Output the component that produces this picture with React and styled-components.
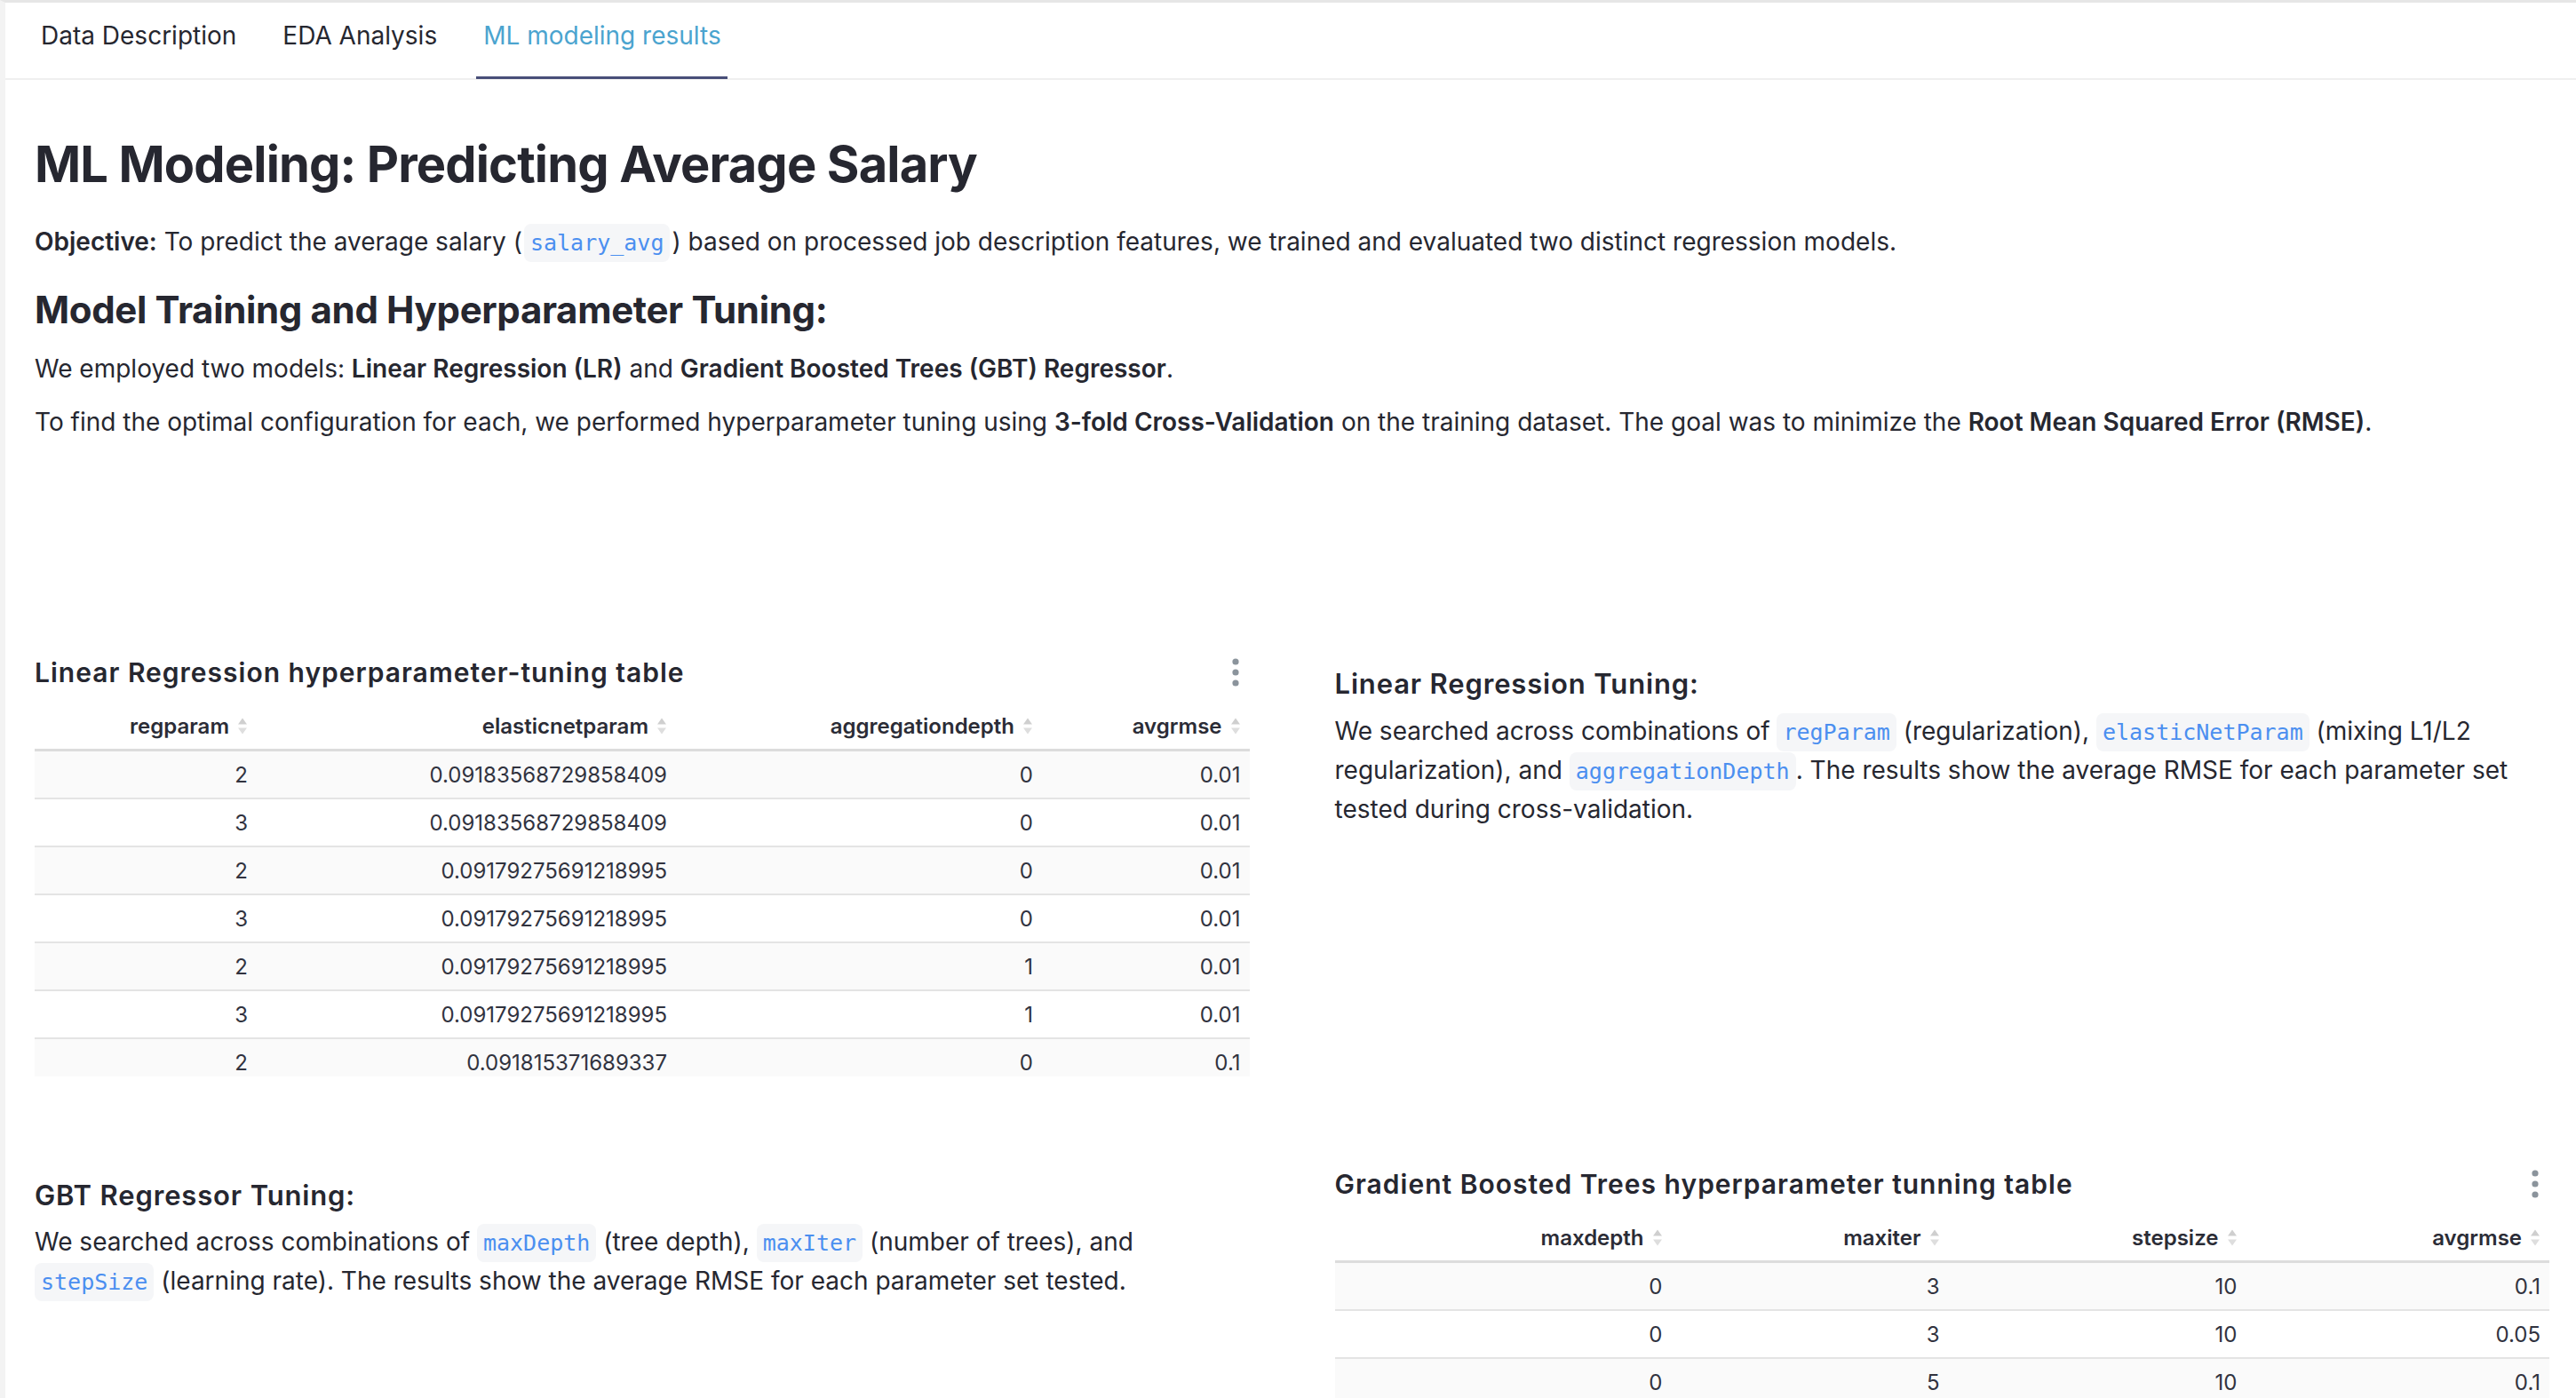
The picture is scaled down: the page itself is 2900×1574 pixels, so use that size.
import React from "react";
import styled, { createGlobalStyle } from "styled-components";

const GlobalStyle = createGlobalStyle`
  html, body { margin: 0; padding: 0; background: #ffffff; }
  body {
    font-family: Inter, "Noto Sans", "Liberation Sans", sans-serif;
    color: #262730;
    -webkit-font-smoothing: antialiased;
  }
  * { box-sizing: border-box; }
`;

const Page = styled.div`
  min-height: 100vh;
  border-top: 3px solid #e6e6e6;
  border-left: 6px solid #f3f3f3;
  background: #fff;
  overflow: hidden;
`;

const TabBar = styled.nav`
  display: flex;
  gap: 38px;
  height: 87px;
  padding-left: 33px;
  border-bottom: 2px solid #efefef;
`;

const Tab = styled.div`
  position: relative;
  height: 85px;
  padding: 15px 7px 0;
  font-size: 28px;
  line-height: 44.8px;
  color: ${(p) => (p.$active ? "#4ba4cf" : "#262730")};
  white-space: nowrap;
  &::after {
    content: "";
    display: ${(p) => (p.$active ? "block" : "none")};
    position: absolute;
    left: -1px;
    right: 0;
    bottom: -1px;
    height: 3px;
    background: #484e78;
  }
`;

const Main = styled.main`
  padding: 0 30px 0 33px;
`;

const Title = styled.h1`
  margin: 62px 0 0;
  font-size: 56px;
  line-height: 67px;
  font-weight: 700;
  letter-spacing: -0.85px;
  color: #262730;
`;

const SubTitle = styled.h2`
  margin: 30px 0 0;
  font-size: 42px;
  line-height: 50px;
  font-weight: 700;
  letter-spacing: -0.35px;
  color: #262730;
`;

const Paragraph = styled.p`
  margin: ${(p) => p.$top ?? 16}px 0 0;
  font-size: 28px;
  line-height: 44px;
  color: #262730;
`;

const Strong = styled.strong`
  font-weight: 600;
`;

const Code = styled.code`
  font-family: "DejaVu Sans Mono", "Liberation Mono", monospace;
  font-size: 25px;
  line-height: 1;
  padding: 7px 7px;
  margin: 0 ${(p) => p.$gap ?? 0}px;
  border-radius: 8px;
  background: #f5f6f8;
  color: #4b8ff0;
`;

const Columns = styled.div`
  display: grid;
  grid-template-columns: 1fr 1fr;
  column-gap: 96px;
  row-gap: 104px;
  margin-top: 243px;
`;

const Section = styled.section`
  padding-top: 12px;
`;

const SectionHeading = styled.h4`
  margin: 0;
  font-size: 31px;
  line-height: 36px;
  font-weight: 600;
  letter-spacing: 0.85px;
  color: #262730;
`;

const TableBlock = styled.div`
  display: flex;
  flex-direction: column;
`;

const TableTitleRow = styled.div`
  display: flex;
  align-items: center;
  justify-content: space-between;
  height: 34px;
  margin-bottom: 17px;
  padding-right: 12px;
`;

const TableTitle = styled.div`
  font-size: 30px;
  font-weight: 600;
  line-height: 34px;
  letter-spacing: 1px;
  color: #262730;
`;

const Table = styled.div`
  height: ${(p) => p.$height}px;
  overflow: hidden;
`;

const Row = styled.div`
  display: grid;
  grid-template-columns: ${(p) => p.$cols};
  height: ${(p) => (p.$header ? 55 : 54)}px;
  border-bottom: ${(p) => (p.$header ? "3px solid #dcdcdc" : "2px solid #e4e4e4")};
  background: ${(p) => (p.$striped ? "#fafafa" : "#ffffff")};
`;

const Cell = styled.div`
  display: flex;
  align-items: center;
  justify-content: flex-end;
  gap: 9px;
  padding-right: 10px;
  font-size: 24px;
  font-weight: ${(p) => (p.$header ? 600 : 400)};
  color: ${(p) => (p.$header ? "#2b2c36" : "#31333f")};
  white-space: nowrap;
`;

const SortIcon = () => (
  <svg width="12" height="19" viewBox="0 0 12 19" aria-hidden="true">
    <path d="M6 0.5 L11 7.5 H1 Z" fill="#cfcfcf" />
    <path d="M6 18.5 L11 11.5 H1 Z" fill="#dedede" />
  </svg>
);

const Kebab = () => (
  <svg width="8" height="32" viewBox="0 0 8 32" aria-hidden="true">
    <circle cx="4" cy="4" r="3.6" fill="#8b949c" />
    <circle cx="4" cy="16" r="3.6" fill="#8b949c" />
    <circle cx="4" cy="28" r="3.6" fill="#8b949c" />
  </svg>
);

const DataTable = ({ title, cols, headers, rows, height }) => (
  <TableBlock>
    <TableTitleRow>
      <TableTitle>{title}</TableTitle>
      <Kebab />
    </TableTitleRow>
    <Table $height={height}>
      <Row $cols={cols} $header>
        {headers.map((h) => (
          <Cell key={h} $header>
            {h}
            <SortIcon />
          </Cell>
        ))}
      </Row>
      {rows.map((r, i) => (
        <Row key={i} $cols={cols} $striped={i % 2 === 0}>
          {r.map((v, j) => (
            <Cell key={j}>{v}</Cell>
          ))}
        </Row>
      ))}
    </Table>
  </TableBlock>
);

const lrRows = [
  ["2", "0.09183568729858409", "0", "0.01"],
  ["3", "0.09183568729858409", "0", "0.01"],
  ["2", "0.09179275691218995", "0", "0.01"],
  ["3", "0.09179275691218995", "0", "0.01"],
  ["2", "0.09179275691218995", "1", "0.01"],
  ["3", "0.09179275691218995", "1", "0.01"],
  ["2", "0.091815371689337", "0", "0.1"],
  ["3", "0.091815371689337", "0", "0.1"],
];

const gbtRows = [
  ["0", "3", "10", "0.1"],
  ["0", "3", "10", "0.05"],
  ["0", "5", "10", "0.1"],
  ["0", "5", "10", "0.05"],
];

export default function App() {
  return (
    <>
      <GlobalStyle />
      <Page>
        <TabBar>
          <Tab>Data Description</Tab>
          <Tab>EDA Analysis</Tab>
          <Tab $active>ML modeling results</Tab>
        </TabBar>
        <Main>
          <Title>ML Modeling: Predicting Average Salary</Title>
          <Paragraph $top={31}>
            <Strong>Objective:</Strong> To predict the average salary (
            <Code $gap={2}>salary_avg</Code>) based on processed job description features, we trained
            and evaluated two distinct regression models.
          </Paragraph>
          <SubTitle>Model Training and Hyperparameter Tuning:</SubTitle>
          <Paragraph $top={19}>
            We employed two models: <Strong>Linear Regression (LR)</Strong> and{" "}
            <Strong>Gradient Boosted Trees (GBT) Regressor</Strong>.
          </Paragraph>
          <Paragraph>
            To find the optimal configuration for each, we performed hyperparameter tuning using{" "}
            <Strong>3-fold Cross-Validation</Strong> on the training dataset. The goal was to minimize
            the <Strong>Root Mean Squared Error (RMSE)</Strong>.
          </Paragraph>

          <Columns>
            <DataTable
              title="Linear Regression hyperparameter-tuning table"
              cols="250px 472px 412px 1fr"
              headers={["regparam", "elasticnetparam", "aggregationdepth", "avgrmse"]}
              rows={lrRows}
              height={421}
            />
            <Section>
              <SectionHeading>Linear Regression Tuning:</SectionHeading>
              <Paragraph $top={13}>
                We searched across combinations of <Code>regParam</Code> (regularization),{" "}
                <Code>elasticNetParam</Code> (mixing L1/L2 regularization), and{" "}
                <Code>aggregationDepth</Code>. The results show the average RMSE for each parameter set
                tested during cross-validation.
              </Paragraph>
            </Section>
            <Section>
              <SectionHeading>GBT Regressor Tuning:</SectionHeading>
              <Paragraph $top={12}>
                We searched across combinations of <Code>maxDepth</Code> (tree depth),{" "}
                <Code>maxIter</Code> (number of trees), and <Code>stepSize</Code> (learning rate). The
                results show the average RMSE for each parameter set tested.
              </Paragraph>
            </Section>
            <DataTable
              title="Gradient Boosted Trees hyperparameter tunning table"
              cols="379px 312px 335px 1fr"
              headers={["maxdepth", "maxiter", "stepsize", "avgrmse"]}
              rows={gbtRows}
              height={421}
            />
          </Columns>
        </Main>
      </Page>
    </>
  );
}
